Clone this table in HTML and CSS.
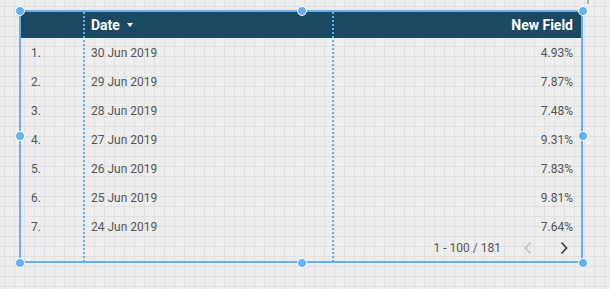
FILE: index.html
```html
<!DOCTYPE html>
<html>
<head>
<meta charset="utf-8">
<link rel="stylesheet" href="styles.css">
</head>
<body>
<div class="canvas">
  <div class="mark"></div>
  <div class="chart">
    <div class="row head">
      <div class="c-num"></div>
      <div class="c-date">Date <span class="caret"></span></div>
      <div class="c-val">New Field</div>
    </div>
    <div class="row"><div class="c-num">1.</div><div class="c-date">30 Jun 2019</div><div class="c-val">4.93%</div></div>
    <div class="row"><div class="c-num">2.</div><div class="c-date">29 Jun 2019</div><div class="c-val">7.87%</div></div>
    <div class="row"><div class="c-num">3.</div><div class="c-date">28 Jun 2019</div><div class="c-val">7.48%</div></div>
    <div class="row"><div class="c-num">4.</div><div class="c-date">27 Jun 2019</div><div class="c-val">9.31%</div></div>
    <div class="row"><div class="c-num">5.</div><div class="c-date">26 Jun 2019</div><div class="c-val">7.83%</div></div>
    <div class="row"><div class="c-num">6.</div><div class="c-date">25 Jun 2019</div><div class="c-val">9.81%</div></div>
    <div class="row"><div class="c-num">7.</div><div class="c-date">24 Jun 2019</div><div class="c-val">7.64%</div></div>
    <div class="pager">
      <span class="range">1 - 100 / 181</span>
      <svg class="chev" width="10" height="14" viewBox="0 0 10 14"><path d="M7.5 1.5 L2.5 7 L7.5 12.5" fill="none" stroke="#c4c4c4" stroke-width="1.8"/></svg>
      <svg class="chev next" width="10" height="14" viewBox="0 0 10 14"><path d="M2.5 1.5 L7.5 7 L2.5 12.5" fill="none" stroke="#444" stroke-width="1.8"/></svg>
    </div>
    <div class="vline l1"></div>
    <div class="vline l2"></div>
    <span class="h h-tl"></span>
    <span class="h h-tm"></span>
    <span class="h h-tr"></span>
    <span class="h h-ml"></span>
    <span class="h h-mr"></span>
    <span class="h h-bl"></span>
    <span class="h h-bm"></span>
    <span class="h h-br"></span>
  </div>
</div>
</body>
</html>
```
FILE: styles.css
```css
html, body {
  margin: 0;
  padding: 0;
}
body {
  width: 610px;
  height: 289px;
  overflow: hidden;
  background-color: #eeeeee;
  background-image:
    linear-gradient(to right, #e0e0e0 1px, transparent 1px),
    linear-gradient(to bottom, #e0e0e0 1px, transparent 1px);
  background-size: 10px 10px;
  background-position: 4px 6px;
  font-family: Roboto, "Liberation Sans", sans-serif;
}
.canvas {
  position: relative;
  padding: 10px 0 0 19px;
}
.mark {
  position: absolute;
  left: 587px;
  top: 0;
  width: 2px;
  height: 4px;
  background: #b0b0b0;
}
.chart {
  position: relative;
  width: 560px;
  height: 249px;
  border: 2px solid #63b1f3;
  display: flex;
  flex-direction: column;
}
.row {
  display: flex;
  height: 29px;
  align-items: center;
  font-size: 12px;
  color: #555555;
}
.row.head {
  height: 26px;
  background: #1b4962;
  color: #ffffff;
  font-weight: 700;
  font-size: 14px;
}
.c-num {
  width: 52px;
  padding-left: 10px;
}
.c-date {
  width: 243px;
  padding-left: 8px;
  display: flex;
  align-items: center;
}
.c-val {
  flex: 1;
  text-align: right;
  padding-right: 8px;
}
.caret {
  display: inline-block;
  width: 0;
  height: 0;
  margin-left: 7px;
  border-left: 3px solid transparent;
  border-right: 3px solid transparent;
  border-top: 4px solid #ffffff;
}
.pager {
  flex: 1;
  display: flex;
  align-items: center;
  justify-content: flex-end;
  padding-right: 12px;
  font-size: 12px;
  color: #555555;
  padding-bottom: 6px;
}
.range {
  margin-right: 22px;
}
.chev {
  display: block;
}
.chev.next {
  margin-left: 26px;
}
.vline {
  position: absolute;
  top: 0;
  bottom: 0;
  width: 2px;
  background-image: linear-gradient(to bottom, #63b1f3 2px, transparent 2px);
  background-size: 2px 4px;
}
.l1 { left: 62px; }
.l2 { left: 311px; }
.h {
  position: absolute;
  width: 8px;
  height: 8px;
  border-radius: 50%;
  background: #63b1f3;
  border: 1.5px solid #ffffff;
  box-sizing: content-box;
}
.h-tl { left: -6.5px; top: -6.5px; }
.h-tm { left: 275.5px; top: -6.5px; }
.h-tr { right: -6.5px; top: -6.5px; }
.h-ml { left: -6.5px; top: 119px; }
.h-mr { right: -6.5px; top: 119px; }
.h-bl { left: -6.5px; bottom: -6.5px; }
.h-bm { left: 275.5px; bottom: -6.5px; }
.h-br { right: -6.5px; bottom: -6.5px; }
```
